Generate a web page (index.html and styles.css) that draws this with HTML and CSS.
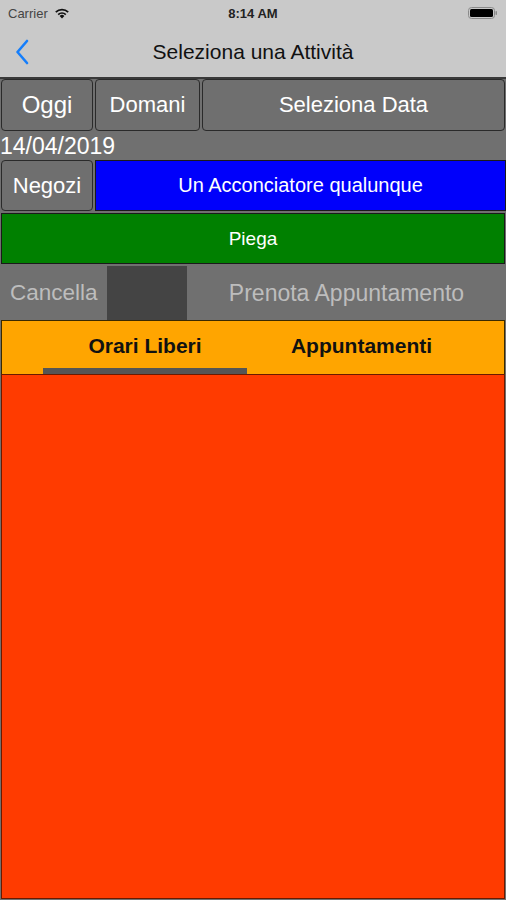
FILE: index.html
```html
<!DOCTYPE html>
<html lang="it">
<head>
  <meta charset="UTF-8">
  <meta name="viewport" content="width=device-width, initial-scale=1.0">
  <title>Seleziona una Attività</title>
  <link rel="stylesheet" href="styles.css">
</head>
<body>
  <div class="screen">
    <div class="status-bar">
      <div class="carrier">
        Carrier
        <svg class="wifi" width="16" height="12" viewBox="0 0 16 12">
          <path d="M8 11.5 L5.6 9 A3.4 3.4 0 0 1 10.4 9 Z" fill="#111"/>
          <path d="M3.6 7 A6.2 6.2 0 0 1 12.4 7 L11.2 8.2 A4.5 4.5 0 0 0 4.8 8.2 Z" fill="#111"/>
          <path d="M1.2 4.6 A9.6 9.6 0 0 1 14.8 4.6 L13.6 5.8 A7.9 7.9 0 0 0 2.4 5.8 Z" fill="#111"/>
        </svg>
      </div>
      <div class="time">8:14 AM</div>
      <div class="battery">
        <svg width="30" height="12" viewBox="0 0 30 12">
          <rect x="0.5" y="0.5" width="26" height="11" rx="3" fill="none" stroke="#8a8a8a"/>
          <rect x="2" y="2" width="23" height="8" rx="1.5" fill="#000"/>
          <rect x="27.5" y="4" width="1.5" height="4" rx="0.7" fill="#8a8a8a"/>
        </svg>
      </div>
    </div>

    <div class="nav-bar">
      <svg class="back" width="14" height="26" viewBox="0 0 14 26">
        <path d="M12 2 L2.5 13 L12 24" fill="none" stroke="#157efb" stroke-width="2.6" stroke-linecap="round" stroke-linejoin="round"/>
      </svg>
      <div class="nav-title">Seleziona una Attività</div>
    </div>

    <div class="content">
      <div class="date-buttons">
        <button class="btn btn-oggi">Oggi</button>
        <button class="btn btn-domani">Domani</button>
        <button class="btn btn-data">Seleziona Data</button>
      </div>

      <div class="date-label">14/04/2019</div>

      <div class="shop-row">
        <button class="btn btn-negozi">Negozi</button>
        <div class="shop-name">Un Acconciatore qualunque</div>
      </div>

      <div class="service">Piega</div>

      <div class="action-row">
        <div class="action action-cancel">Cancella</div>
        <div class="action-gap"></div>
        <div class="action action-book">Prenota Appuntamento</div>
      </div>

      <div class="tabs">
        <div class="tab tab-active">Orari Liberi</div>
        <div class="tab tab-other">Appuntamenti</div>
      </div>

      <div class="slots"></div>
    </div>
  </div>
</body>
</html>
```

FILE: styles.css
```css
body {
  margin: 0;
  font-family: "Liberation Sans", Arial, sans-serif;
  background: #707070;
}
.screen {
  width: 506px;
  height: 900px;
  display: flex;
  flex-direction: column;
  overflow: hidden;
}
.status-bar {
  height: 26px;
  background: #c9c9c9;
  display: flex;
  align-items: center;
  justify-content: space-between;
  padding: 0 8px;
  position: relative;
}
.carrier {
  font-size: 13px;
  color: #444;
  display: flex;
  align-items: center;
  gap: 6px;
}
.time {
  position: absolute;
  left: 0;
  right: 0;
  text-align: center;
  font-size: 13px;
  font-weight: bold;
  color: #222;
}
.battery {
  display: flex;
  align-items: center;
}
.nav-bar {
  height: 51px;
  background: #c9c9c9;
  border-bottom: 2px solid #3a3a3a;
  display: flex;
  align-items: center;
  position: relative;
}
.back {
  margin-left: 15px;
}
.nav-title {
  position: absolute;
  left: 0;
  right: 0;
  text-align: center;
  font-size: 21px;
  color: #111;
}
.content {
  flex: 1;
  display: flex;
  flex-direction: column;
  background: #707070;
}
.btn {
  font-family: "Liberation Sans", Arial, sans-serif;
  background: #6f6f6f;
  color: #fff;
  border: 1px solid #2a2a2a;
  border-radius: 4px;
  padding: 0;
  margin: 0;
}
.date-buttons {
  display: flex;
  gap: 2px;
  height: 52px;
  padding: 0 1px;
}
.btn-oggi {
  width: 92px;
  font-size: 24px;
}
.btn-domani {
  width: 105px;
  font-size: 22px;
}
.btn-data {
  flex: 1;
  font-size: 22px;
}
.date-label {
  height: 29px;
  line-height: 31px;
  color: #fff;
  font-size: 23px;
}
.shop-row {
  display: flex;
  gap: 2px;
  height: 51px;
  padding-left: 1px;
}
.btn-negozi {
  width: 92px;
  font-size: 22px;
}
.shop-name {
  flex: 1;
  background: #0000fb;
  border: 1px solid #1a1a1a;
  color: #fff;
  font-size: 20px;
  display: flex;
  align-items: center;
  justify-content: center;
}
.service {
  margin: 2px 1px 0;
  height: 49px;
  background: #008000;
  border: 1px solid #1a1a1a;
  color: #fff;
  font-size: 19px;
  display: flex;
  align-items: center;
  justify-content: center;
}
.action-row {
  display: flex;
  height: 54px;
  margin-top: 2px;
}
.action {
  display: flex;
  align-items: center;
  color: #bdbdbd;
  font-size: 22.5px;
}
.action-cancel {
  width: 97px;
  padding-left: 10px;
}
.action-gap {
  width: 80px;
  background: #444;
}
.action-book {
  flex: 1;
  justify-content: center;
  font-size: 23px;
}
.tabs {
  height: 53px;
  margin: 0 1px;
  background: #ffa500;
  border: 1px solid #3a2a00;
  border-bottom: none;
  display: flex;
  padding: 0 28px 0 41px;
}
.tab {
  display: flex;
  align-items: center;
  justify-content: center;
  font-weight: bold;
  font-size: 21px;
  color: #111;
  padding-top: 2px;
  border-bottom: 6px solid transparent;
}
.tab-active {
  width: 204px;
  border-bottom-color: #555;
}
.tab-other {
  flex: 1;
}
.slots {
  flex: 1;
  margin: 0 1px 1px;
  background: #ff3b00;
  border: 1px solid #6a1a00;
}
```
